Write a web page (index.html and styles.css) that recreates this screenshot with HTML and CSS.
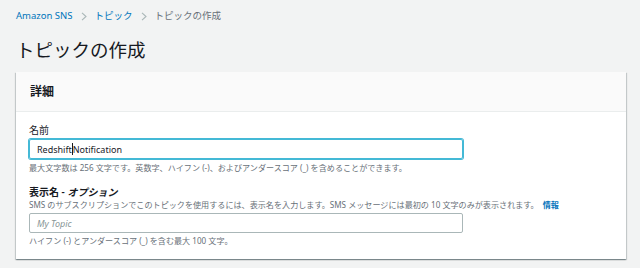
FILE: index.html
```html
<!DOCTYPE html>
<html lang="ja">
<head>
<meta charset="utf-8">
<link rel="stylesheet" href="styles.css">
</head>
<body>
<div class="page">
  <nav class="crumbs">
    <a class="crumb-link">Amazon SNS</a>
    <svg class="chev" width="6" height="9" viewBox="0 0 6 9"><path d="M1 0.8 L5 4.5 L1 8.2" fill="none" stroke="#aab7b8" stroke-width="1.1"/></svg>
    <a class="crumb-link">トピック</a>
    <svg class="chev" width="6" height="9" viewBox="0 0 6 9"><path d="M1 0.8 L5 4.5 L1 8.2" fill="none" stroke="#aab7b8" stroke-width="1.1"/></svg>
    <span class="crumb-cur">トピックの作成</span>
  </nav>
  <h1 class="title">トピックの作成</h1>
  <section class="card">
    <header class="card-head">詳細</header>
    <div class="card-body">
      <div class="field">
        <label class="label">名前</label>
        <div class="input focus"><span class="val">Redshift</span><span class="caret"></span><span class="val">Notification</span></div>
        <div class="hint">最大文字数は 256 文字です。英数字、ハイフン (-)、およびアンダースコア (_) を含めることができます。</div>
      </div>
      <div class="field second">
        <label class="label">表示名 - <i>オプション</i></label>
        <div class="desc">SMS のサブスクリプションでこのトピックを使用するには、表示名を入力します。SMS メッセージには最初の 10 文字のみが表示されます。<a class="info">情報</a></div>
        <div class="input"><span class="ph">My Topic</span></div>
        <div class="hint hint2">ハイフン (-) とアンダースコア (_) を含む最大 100 文字。</div>
      </div>
    </div>
  </section>
</div>
</body>
</html>
```

FILE: styles.css
```css
* { box-sizing: border-box; }
html, body { margin: 0; padding: 0; }
body {
  background: #f2f3f3;
  font-family: "Noto Sans", "Noto Sans CJK JP", sans-serif;
  color: #16191f;
  width: 640px;
  height: 268px;
  overflow: hidden;
}
.page { padding: 9px 14px 0 16px; }
.crumbs {
  display: flex;
  align-items: center;
  gap: 8px;
  height: 14px;
  font-size: 9.5px;
  line-height: 14px;
}
.crumb-link { color: #0073bb; }
.crumb-cur { color: #687078; }
.chev { display: block; }
.title {
  margin: 14px 0 0;
  font-size: 18.5px;
  font-weight: 400;
  line-height: 26px;
  height: 26px;
}
.card {
  margin-top: 9px;
  background: #fff;
  box-shadow: 0 1px 1px 0 rgba(0,28,36,.3), 1px 1px 1px 0 rgba(0,28,36,.15), -1px 1px 1px 0 rgba(0,28,36,.15);
  height: 187px;
}
.card-head {
  height: 40px;
  background: #fafafa;
  border-bottom: 1px solid #eaeded;
  padding: 0 14px;
  font-size: 12px;
  font-weight: 700;
  line-height: 40px;
}
.card-body { padding: 11px 13px 0; }
.field { display: flex; flex-direction: column; }
.field.second { margin-top: 11px; }
.label {
  font-size: 10px;
  line-height: 14px;
  height: 14px;
}
.label i { font-style: italic; }
.field.second .label { font-weight: 600; }
.input {
  margin-top: 2px;
  width: 434px;
  height: 20px;
  border: 1px solid #aab7b8;
  border-radius: 2px;
  padding: 0 7px;
  display: flex;
  align-items: center;
  font-size: 9px;
}
.input.focus {
  border-color: #44b9d6;
  box-shadow: 0 0 0 1px #44b9d6;
}
.caret {
  display: inline-block;
  width: 1px;
  height: 12px;
  background: #16191f;
}
.ph { color: #879596; font-style: italic; }
.hint, .desc {
  font-size: 8.1px;
  line-height: 12px;
  color: #687078;
}
.hint { margin-top: 3px; }
.hint2 { margin-top: 2px; }
.desc { margin-top: 0; }
.info { color: #0073bb; font-weight: 700; margin-left: 4px; }
```
